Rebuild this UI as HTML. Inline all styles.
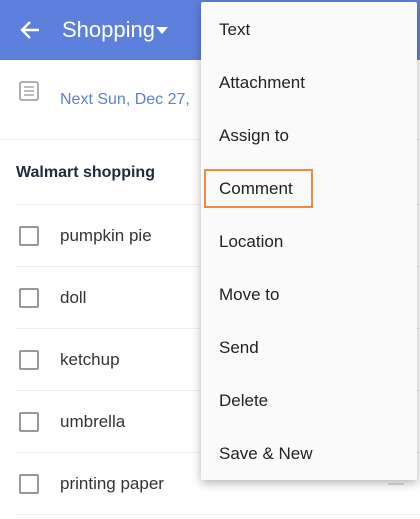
<!DOCTYPE html><html><head><style>
body{margin:0;width:420px;height:519px;overflow:hidden;background:#fff;font-family:"Liberation Sans",sans-serif;position:relative}
.hdr{position:absolute;left:0;top:0;width:420px;height:60px;background:#5d80dd}
.t{position:absolute;color:#fff;font-size:22px;left:62px;top:17px}
.line{position:absolute;left:0;right:0;height:1px;background:#eee}
.it{position:absolute;left:60px;font-size:17px;color:#333}
.cb{position:absolute;left:19px;width:16px;height:16px;border:2px solid #999;border-radius:2px}
.menu{position:absolute;left:201px;top:2px;width:216px;height:478px;background:#fafafa;box-shadow:0 3px 10px rgba(0,0,0,.3);border-radius:2px}
.mi{position:absolute;left:18px;font-size:17px;color:#222}
</style></head><body>
<div class="hdr">
<svg style="position:absolute;left:19px;top:19px" width="22" height="22" viewBox="0 0 22 22"><path d="M20 11H3M11 3L3 11l8 8" stroke="#fff" stroke-width="2.4" fill="none"/></svg>
<div class="t">Shopping</div>
<svg style="position:absolute;left:156px;top:27px" width="12" height="7"><path d="M0 0h12L6 7z" fill="#fff"/></svg>
</div>
<svg style="position:absolute;left:19px;top:81px" width="20" height="20" viewBox="0 0 20 20"><rect x="1" y="1" width="18" height="18" rx="2" fill="none" stroke="#999" stroke-width="1.6"/><path d="M5 6h10M5 10h10M5 14h10" stroke="#999" stroke-width="1.2"/></svg>
<div style="position:absolute;left:60px;top:91px;font-size:16px;color:#5d80dd">Next Sun, Dec 27,</div>
<div class="line" style="top:139px"></div>
<div style="position:absolute;left:16px;top:164px;font-size:16px;font-weight:bold;color:#1f2a3a">Walmart shopping</div>
<div class="line" style="top:204px;left:16px"></div>
<div class="cb" style="top:226px"></div><div class="it" style="top:226px">pumpkin pie</div>
<div class="line" style="top:266px;left:16px"></div>
<div class="cb" style="top:288px"></div><div class="it" style="top:288px">doll</div>
<div class="line" style="top:328px;left:16px"></div>
<div class="cb" style="top:350px"></div><div class="it" style="top:350px">ketchup</div>
<div class="line" style="top:390px;left:16px"></div>
<div class="cb" style="top:412px"></div><div class="it" style="top:412px">umbrella</div>
<div class="line" style="top:452px;left:16px"></div>
<div class="cb" style="top:474px"></div><div class="it" style="top:474px">printing paper</div>
<div style="position:absolute;left:388px;top:483px;width:16px;height:2px;background:#ddd"></div>
<div class="line" style="top:514px;left:16px"></div>
<div class="menu">
<div class="mi" style="top:18px">Text</div>
<div class="mi" style="top:71px">Attachment</div>
<div class="mi" style="top:124px">Assign to</div>
<div style="position:absolute;left:3px;top:167px;width:105px;height:35px;border:2px solid #ee8844"></div>
<div class="mi" style="top:177px">Comment</div>
<div class="mi" style="top:230px">Location</div>
<div class="mi" style="top:283px">Move to</div>
<div class="mi" style="top:336px">Send</div>
<div class="mi" style="top:389px">Delete</div>
<div class="mi" style="top:442px">Save &amp; New</div>
</div>
</body></html>
